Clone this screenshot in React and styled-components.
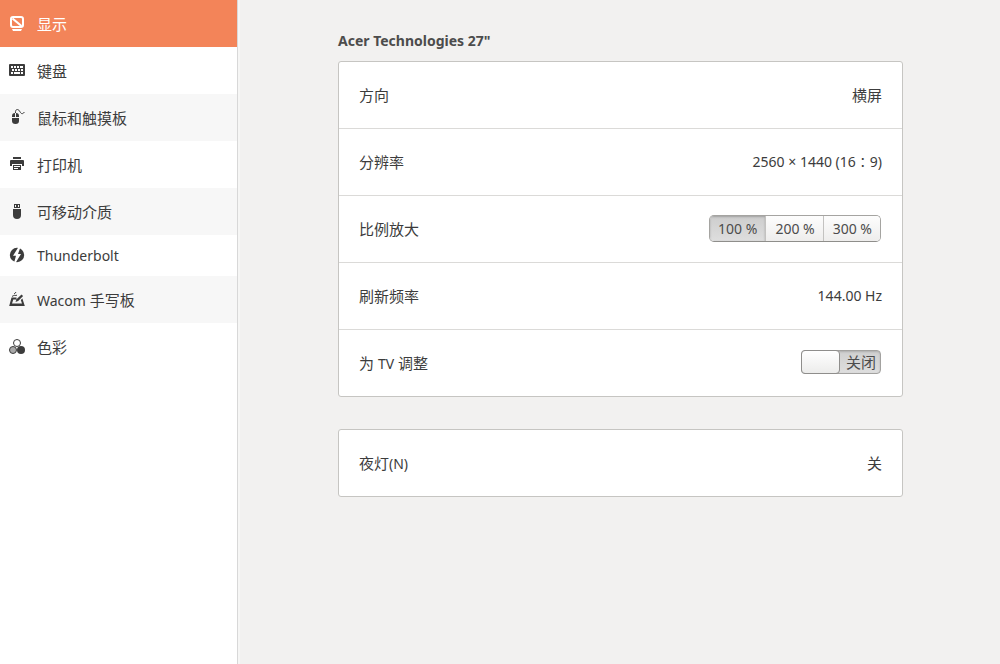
import React, { useState } from 'react';
import styled, { createGlobalStyle } from 'styled-components';

const GlobalStyle = createGlobalStyle`
    * {
        box-sizing: border-box;
    }

    body {
        margin: 0;
        background: #f2f1f0;
        color: #3c3c3c;
        font-family: "Noto Sans", "Noto Sans CJK SC", sans-serif;
        font-size: 15px;
    }

    button, input {
        font: inherit;
        color: inherit;
    }
`;

const Window = styled.div`
    display: flex;
    min-height: 100vh;
`;

const Sidebar = styled.nav`
    width: 24%;
    min-width: 238px;
    max-width: 280px;
    flex-shrink: 0;
    background: #fff;
    border-right: 1px solid #d8d8d8;
    box-shadow: 2px 0 0 #f6f6f5;

    @media (max-width: 1000px) {
        width: 238px;
    }
`;

const NavLink = styled.a`
    display: flex;
    align-items: center;
    gap: 12px;
    padding: 10px 9px;
    line-height: ${({ $compact }) => ($compact ? 21 : 25)}px;
    color: ${({ $active }) => ($active ? '#fff' : '#3c3c3c')};
    background: #fff;
    text-decoration: none;

    &:nth-child(odd) {
        background: #f7f7f7;
    }

    &&[aria-current] {
        background: #f38459;
    }

    svg {
        flex-shrink: 0;
        margin-bottom: 1px;
    }
`;

const NavName = styled.span`
    padding-top: ${({ $compact }) => ($compact ? 0 : 2)}px;
`;

const Main = styled.main`
    flex: 1;
    padding: 30px 97px 30px 100px;
`;

const Heading = styled.h1`
    margin: 0 0 10px;
    font-size: 14px;
    line-height: 21px;
    font-weight: 700;
    color: #4c4c4c;
`;

const Card = styled.section`
    margin-bottom: 32px;
    background: #fff;
    border: 1px solid #c6c5c2;
    border-radius: 3px;

    && > * + * {
        border-top: 1px solid #dbdad8;
        min-height: 67px;
    }
`;

const rowStyles = `
    display: flex;
    align-items: center;
    justify-content: space-between;
    width: 100%;
    min-height: 66px;
    padding: 0 20px 2px;
    text-align: left;
`;

const Row = styled.div`
    ${rowStyles}
`;

const RowButton = styled.button`
    border: 0;
    background: none;
    ${rowStyles}
`;

const Latin = styled.span`
    font-size: 14px;
`;

const Segments = styled.div`
    display: flex;
    height: 27px;
    margin-right: 1px;
    border: 1px solid #a5a4a1;
    border-bottom-color: #8f8e8b;
    border-radius: 5px;
    overflow: hidden;
    font-size: 14px;
`;

const Segment = styled.label`
    display: flex;
    align-items: center;
    padding: 0 8px 0 9px;
    background: linear-gradient(#fdfdfd, #eeedec);
    color: #4c4c4c;

    & + & {
        border-left: 1px solid #c3c2c0;
    }

    &:has(input:checked) {
        padding: 0 8px;
        background: linear-gradient(#cdcdcd, #dedede);
        box-shadow: inset 0 1px 2px #a0a0a0;
    }

    input {
        appearance: none;
        width: 0;
        margin: 0;
    }
`;

const Switch = styled.label`
    display: flex;
    width: 80px;
    height: 24px;
    margin-right: 1px;
    border: 1px solid #a3a2a0;
    border-radius: 4px;
    background: linear-gradient(#cfcfcf, #dedede);
    box-shadow: inset 0 1px 2px #b0b0b0;
    line-height: 23px;
    color: #4c4c4c;

    input {
        appearance: none;
        width: 39px;
        height: 24px;
        margin: -1px 0 0 -1px;
        border: 1px solid #8f8e8c;
        border-radius: 4px;
        background: linear-gradient(#fff, #ececeb);
    }

    input:checked {
        order: 1;
    }

    span {
        flex: 1;
        padding-left: 2px;
        text-align: center;
    }
`;

const Icon = ({ children }) => (
    <svg width="16" height="16" viewBox="0 0 16 16" fill="currentColor" aria-hidden="true">
        {children}
    </svg>
);

const DisplayIcon = () => (
    <Icon>
        <rect x="2" y="2" width="12" height="10" rx="2" fill="none" stroke="currentColor" strokeWidth="2" />
        <path d="M3.500 3.500l9 7.500" fill="none" stroke="currentColor" strokeWidth="2.200" />
        <path d="M3 14h10l-1 2H4z" />
    </Icon>
);

const KeyboardIcon = () => (
    <Icon>
        <path
            fillRule="evenodd"
            d="M1 2h14q1 0 1 1v10q0 1-1 1H1q-1 0-1-1V3q0-1 1-1zM2 4v2h2V4zM5 4v2h2V4zM8 4v2h2V4zM11 4v2h3V4zM3 7v2h2V7zM6 7v2h2V7zM9 7v2h2V7zM12 7v2h2V7zM2 10v2h2v-2zM5 10v2h6v-2zM12 10v2h2v-2z"
        />
    </Icon>
);

const MouseIcon = () => (
    <Icon>
        <path d="M3 7q0-3 3-3v4H3zM7 4q3 0 3 3v1H7zM3 9h7v3q0 3-3.500 3T3 12z" />
        <path d="M6.500 4C6 0 9-.5 10.500 2s2.500 4 5 1" fill="none" stroke="currentColor" />
    </Icon>
);

const PrinterIcon = () => (
    <Icon>
        <path d="M4 1h8v2H4zM2 4h12q1 0 1 1v5h-2V8H3v2H1V5q0-1 1-1z" />
        <path fillRule="evenodd" d="M4 9h8v5H4zM5 10v1h6v-1zM5 12v1h4v-1z" />
    </Icon>
);

const UsbIcon = () => (
    <Icon>
        <path fillRule="evenodd" d="M5 1h6v4H5zM6 2v2h1V2zM9 2v2h1V2z" />
        <path d="M4 6h8v6q0 4-4 4t-4-4z" />
    </Icon>
);

const ThunderboltIcon = () => (
    <Icon>
        <circle cx="8" cy="8" r="7.200" />
        <path d="M9.500 0L4 8.800h3L5 16h1.500L12 7H9l2.500-7z" fill="#fff" />
    </Icon>
);

const TabletIcon = () => (
    <Icon>
        <path d="M2.500 6.500h5v2H4.300L3 12.500h10l-1.200-3.500 1.600-1.600L15.800 15H.2z" />
        <path d="M6.500 11l1-2.800 5-4.700 1.600 1.500-5 5z" />
        <path d="M3 5.500q1-1 2.500-1T8 4.200M5 3q1-.2 2-2" fill="none" stroke="currentColor" />
    </Icon>
);

const ColorIcon = () => (
    <Icon>
        <circle cx="8" cy="5" r="3.500" fill="#fff" stroke="currentColor" />
        <circle cx="4" cy="12" r="3.500" fill="#a8a8a8" stroke="currentColor" />
        <circle cx="12" cy="12" r="4" />
    </Icon>
);

const devices = [
    { id: 'display', name: '显示', icon: DisplayIcon },
    { id: 'keyboard', name: '键盘', icon: KeyboardIcon },
    { id: 'mouse', name: '鼠标和触摸板', icon: MouseIcon },
    { id: 'printers', name: '打印机', icon: PrinterIcon },
    { id: 'media', name: '可移动介质', icon: UsbIcon },
    { id: 'thunderbolt', name: <Latin>Thunderbolt</Latin>, icon: ThunderboltIcon, compact: true },
    { id: 'wacom', name: <><Latin>Wacom</Latin> 手写板</>, icon: TabletIcon },
    { id: 'color', name: '色彩', icon: ColorIcon },
];

const App = () => {
    const [active, setActive] = useState('display');
    const [scale, setScale] = useState(100);
    const [tv, setTv] = useState(false);

    return (
        <Window>
            <GlobalStyle />
            <Sidebar>
                {devices.map(({ id, name, icon: DeviceIcon, compact }) => (
                    <NavLink
                        key={id}
                        href={`#${id}`}
                        $active={id === active}
                        $compact={compact}
                        aria-current={id === active ? 'page' : undefined}
                        onClick={() => setActive(id)}
                    >
                        <DeviceIcon />
                        <NavName $compact={compact}>{name}</NavName>
                    </NavLink>
                ))}
            </Sidebar>
            <Main>
                <Heading>Acer Technologies 27"</Heading>
                <Card>
                    <RowButton type="button">
                        <span>方向</span>
                        <span>横屏</span>
                    </RowButton>
                    <RowButton type="button">
                        <span>分辨率</span>
                        <Latin>2560 × 1440 (16∶9)</Latin>
                    </RowButton>
                    <Row>
                        <span id="scale-label">比例放大</span>
                        <Segments role="radiogroup" aria-labelledby="scale-label">
                            {[100, 200, 300].map(value => (
                                <Segment key={value}>
                                    <input
                                        type="radio"
                                        name="scale"
                                        checked={scale === value}
                                        onChange={() => setScale(value)}
                                    />
                                    {value} %
                                </Segment>
                            ))}
                        </Segments>
                    </Row>
                    <RowButton type="button">
                        <span>刷新频率</span>
                        <Latin>144.00 Hz</Latin>
                    </RowButton>
                    <Row>
                        <span id="tv-label">为 <Latin>TV</Latin> 调整</span>
                        <Switch>
                            <input
                                type="checkbox"
                                role="switch"
                                aria-labelledby="tv-label"
                                checked={tv}
                                onChange={() => setTv(!tv)}
                            />
                            <span>{tv ? '打开' : '关闭'}</span>
                        </Switch>
                    </Row>
                </Card>
                <Card>
                    <RowButton type="button">
                        <span>夜灯<Latin>(N)</Latin></span>
                        <span>关</span>
                    </RowButton>
                </Card>
            </Main>
        </Window>
    );
};

export default App;
